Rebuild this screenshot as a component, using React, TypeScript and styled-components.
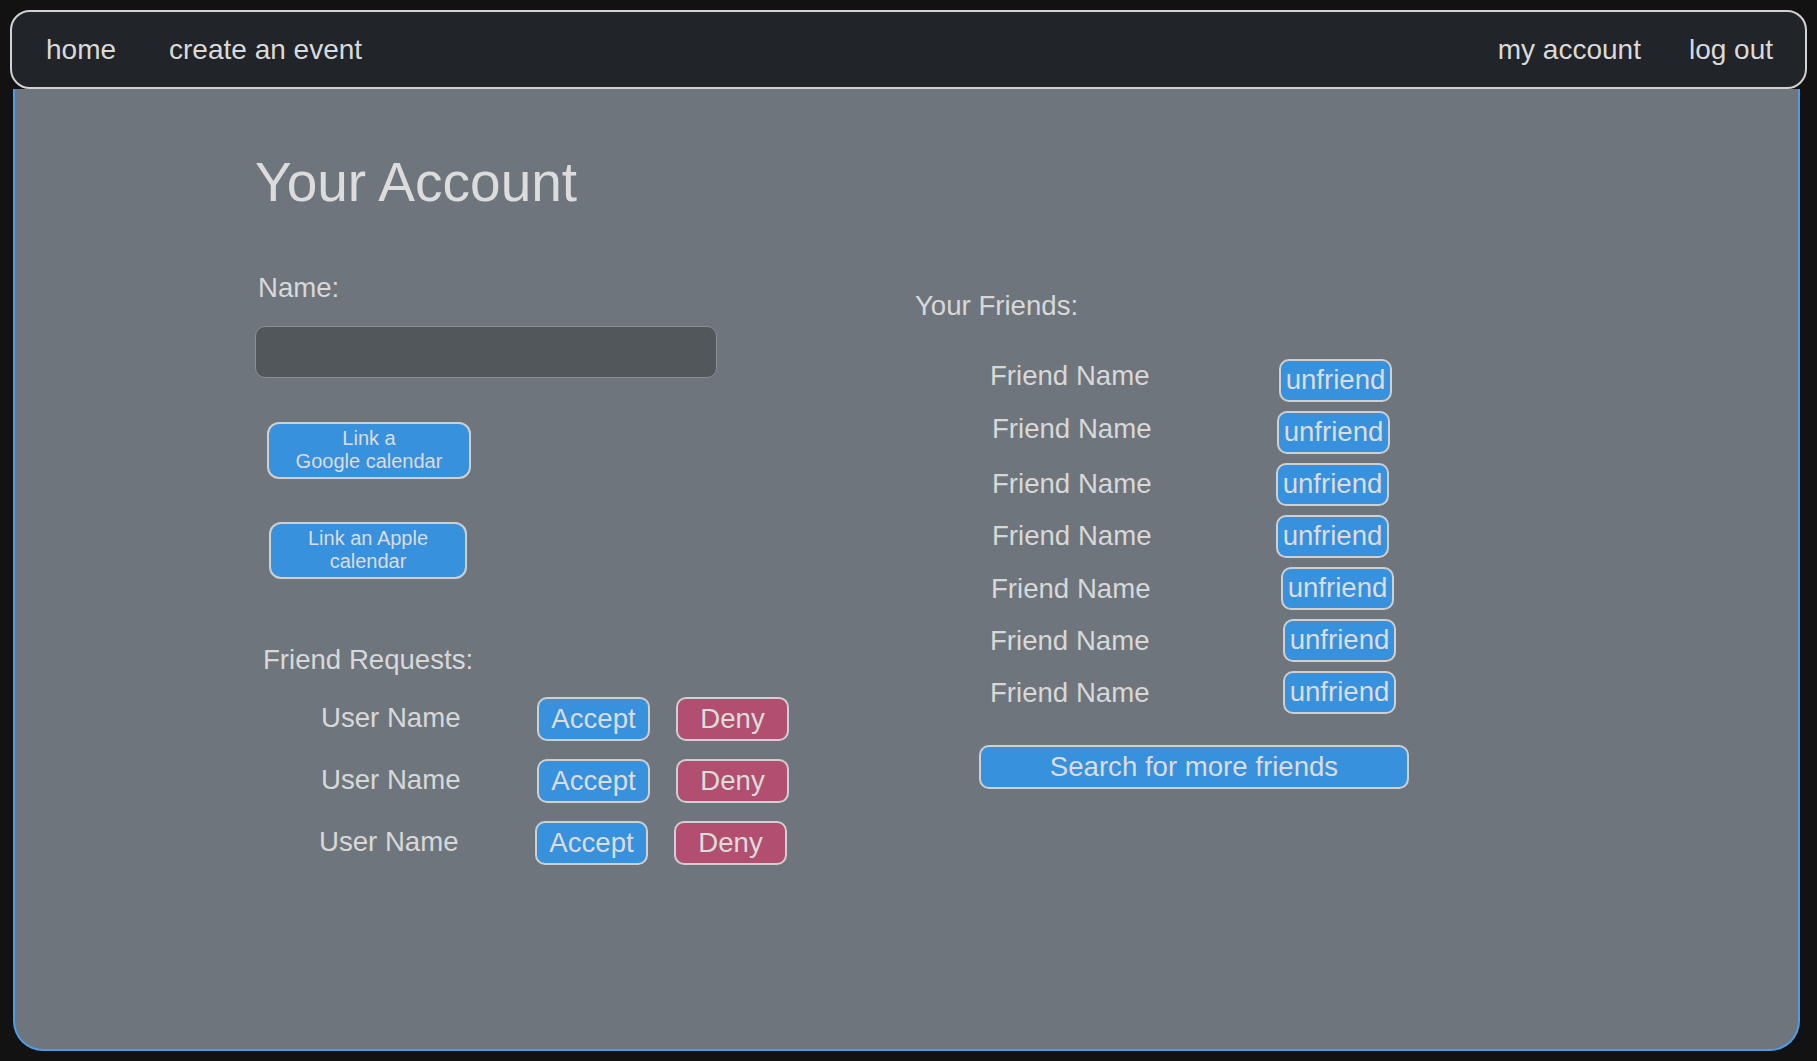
import React from "react";
import styled, { createGlobalStyle } from "styled-components";

const Global = createGlobalStyle`
  html, body { margin: 0; padding: 0; background: #121212; }
  body { font-family: "Liberation Sans", Arial, sans-serif; }
  * { box-sizing: border-box; }
`;

const Page = styled.div`
  height: 100vh;
  padding: 10px;
  display: flex;
  flex-direction: column;
`;

const NavBar = styled.nav`
  height: 79px;
  flex: none;
  background: #212428;
  border: 2px solid #d2d2d2;
  border-radius: 20px;
  display: flex;
  align-items: center;
  justify-content: space-between;
  padding: 0 32px 0 34px;
  position: relative;
  z-index: 1;
`;

const NavGroup = styled.div<{ $gap: number }>`
  display: flex;
  align-items: center;
  gap: ${(p) => p.$gap}px;
`;

const NavLink = styled.a`
  color: #dadada;
  font-size: 28px;
  line-height: 1;
  text-decoration: none;
  cursor: pointer;
`;

const Panel = styled.main`
  flex: 1;
  margin: 0 7px 0 3px;
  background: #6e757d;
  border: 2px solid #4c9de6;
  border-top: none;
  border-radius: 0 0 30px 30px;
  padding: 66px 0 0 240px;
  color: #d8d8d8;
`;

const Title = styled.h1`
  margin: 0;
  font-size: 55px;
  font-weight: 400;
  line-height: 1;
  color: #dcdcdc;
`;

const Columns = styled.div`
  display: flex;
  margin-top: 64px;
`;

const LeftCol = styled.section`
  width: 660px;
  display: flex;
  flex-direction: column;
  align-items: flex-start;
`;

const RightCol = styled.section`
  display: flex;
  flex-direction: column;
  align-items: flex-start;
  padding-top: 18px;
`;

const Label = styled.div<{ $indent?: number; $top?: number }>`
  font-size: 27.6px;
  line-height: 1;
  margin-left: ${(p) => p.$indent ?? 0}px;
  margin-top: ${(p) => p.$top ?? 0}px;
  color: #d8d8d8;
`;

const NameInput = styled.input`
  width: 462px;
  height: 52px;
  margin-top: 24px;
  background: #52575c;
  border: 1px solid #8c9096;
  border-radius: 10px;
  padding: 0 12px;
  font-family: inherit;
  font-size: 22px;
  color: #e0e0e0;
  outline: none;
`;

const Button = styled.button<{
  $variant?: "blue" | "red";
  $w: number;
  $h: number;
  $size: number;
  $radius?: number;
  $shift?: number;
}>`
  width: ${(p) => p.$w}px;
  height: ${(p) => p.$h}px;
  flex: none;
  margin-left: ${(p) => p.$shift ?? 0}px;
  background: ${(p) => (p.$variant === "red" ? "#b24f70" : "#3891dd")};
  border: 2px solid #d0d0d0;
  border-radius: ${(p) => p.$radius ?? 10}px;
  color: #dcdcdc;
  font-family: inherit;
  font-size: ${(p) => p.$size}px;
  line-height: 1.15;
  padding: 0;
  display: flex;
  align-items: center;
  justify-content: center;
  text-align: center;
  cursor: pointer;
`;

const CalButtonWrap = styled.div<{ $indent: number; $top: number }>`
  margin-left: ${(p) => p.$indent}px;
  margin-top: ${(p) => p.$top}px;
`;

const RequestList = styled.div`
  display: flex;
  flex-direction: column;
  gap: 18px;
  margin-top: 24px;
  margin-left: 66px;
`;

const RequestRow = styled.div<{ $shift: number }>`
  display: flex;
  align-items: center;
  margin-left: ${(p) => p.$shift}px;
`;

const RequestName = styled.span`
  width: 216px;
  font-size: 27.6px;
  line-height: 1;
  color: #d8d8d8;
  padding-bottom: 3px;
`;

const RequestActions = styled.div`
  display: flex;
  gap: 26px;
`;

const FriendList = styled.div`
  display: flex;
  flex-direction: column;
  gap: 9px;
  margin-top: 39px;
  margin-left: 75px;
`;

const FriendRow = styled.div`
  display: flex;
  align-items: center;
`;

const FriendName = styled.span<{ $shift: number; $dy: number }>`
  width: 290px;
  padding-left: ${(p) => p.$shift}px;
  padding-top: ${(p) => Math.max(0, p.$dy * 2)}px;
  padding-bottom: ${(p) => Math.max(0, -p.$dy * 2)}px;
  font-size: 27.6px;
  line-height: 1;
  color: #d8d8d8;
`;

const SearchWrap = styled.div`
  margin-top: 31px;
  margin-left: 64px;
`;

const requests = [0, 0, -2];
const friends: Array<{ x: number; dy: number; bx: number }> = [
  { x: -1.5, dy: -4, bx: -1 },
  { x: 2, dy: -3, bx: -3 },
  { x: 2, dy: 0, bx: -4 },
  { x: 2, dy: 0, bx: -4 },
  { x: 1, dy: 1, bx: 1 },
  { x: 0, dy: 1, bx: 3 },
  { x: 0, dy: 0.5, bx: 3 },
];

export default function App() {
  return (
    <>
      <Global />
      <Page>
        <NavBar>
          <NavGroup $gap={53}>
            <NavLink>home</NavLink>
            <NavLink>create an event</NavLink>
          </NavGroup>
          <NavGroup $gap={48}>
            <NavLink>my account</NavLink>
            <NavLink>log out</NavLink>
          </NavGroup>
        </NavBar>
        <Panel>
          <Title>Your Account</Title>
          <Columns>
            <LeftCol>
              <Label $indent={3}>Name:</Label>
              <NameInput type="text" />
              <CalButtonWrap $indent={12} $top={44}>
                <Button $w={204} $h={57} $size={20} $radius={12}>
                  Link a
                  <br />
                  Google calendar
                </Button>
              </CalButtonWrap>
              <CalButtonWrap $indent={14} $top={43}>
                <Button $w={198} $h={57} $size={20} $radius={12}>
                  Link an Apple
                  <br />
                  calendar
                </Button>
              </CalButtonWrap>
              <Label $indent={8} $top={67}>Friend Requests:</Label>
              <RequestList>
                {requests.map((s, i) => (
                  <RequestRow key={i} $shift={s}>
                    <RequestName>User Name</RequestName>
                    <RequestActions>
                      <Button $w={113} $h={44} $size={27.6}>Accept</Button>
                      <Button $variant="red" $w={113} $h={44} $size={27.6}>Deny</Button>
                    </RequestActions>
                  </RequestRow>
                ))}
              </RequestList>
            </LeftCol>
            <RightCol>
              <Label>Your Friends:</Label>
              <FriendList>
                {friends.map((f, i) => (
                  <FriendRow key={i}>
                    <FriendName $shift={f.x} $dy={f.dy}>Friend Name</FriendName>
                    <Button $w={113} $h={43} $size={27.6} $shift={f.bx}>unfriend</Button>
                  </FriendRow>
                ))}
              </FriendList>
              <SearchWrap>
                <Button $w={430} $h={44} $size={27.6}>Search for more friends</Button>
              </SearchWrap>
            </RightCol>
          </Columns>
        </Panel>
      </Page>
    </>
  );
}
